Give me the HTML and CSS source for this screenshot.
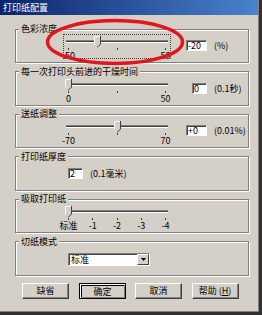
FILE: index.html
```html
<!DOCTYPE html>
<html>
<head>
  <meta charset="utf-8">
  <link rel="stylesheet" href="styles.css">
</head>
<body>
  <div class="window">
    <div class="titlebar">打印纸配置</div>

    <div class="content">
      <fieldset class="group">
        <legend>色彩浓度</legend>
        <div class="row">
          <div class="slider focus">
            <div class="track"></div>
            <svg class="thumb" style="left: 29px;" width="7" height="12" viewBox="0 0 7 12"><polygon points="0.5,0.5 6.5,0.5 6.5,8 3.5,11 0.5,8" fill="#d4d0c8"/><polyline points="0.5,8.5 0.5,0.5 6,0.5" fill="none" stroke="#fff"/><polyline points="6.5,0 6.5,8 3.5,11 3,11" fill="none" stroke="#404040"/></svg>
            <div class="ticks">
              <div class="tick"><i></i><span>-50</span></div>
              <div class="tick"><i></i><span></span></div>
              <div class="tick"><i></i><span>50</span></div>
            </div>
          </div>
          <div class="value"><span class="edit">-20</span></div>
          <span class="unit">(%)</span>
        </div>
      </fieldset>

      <fieldset class="group">
        <legend>每一次打印头前进的干燥时间</legend>
        <div class="row">
          <div class="slider">
            <div class="track"></div>
            <svg class="thumb" style="left: 0px;" width="7" height="12" viewBox="0 0 7 12"><polygon points="0.5,0.5 6.5,0.5 6.5,8 3.5,11 0.5,8" fill="#d4d0c8"/><polyline points="0.5,8.5 0.5,0.5 6,0.5" fill="none" stroke="#fff"/><polyline points="6.5,0 6.5,8 3.5,11 3,11" fill="none" stroke="#404040"/></svg>
            <div class="ticks">
              <div class="tick"><i></i><span>0</span></div>
              <div class="tick"><i></i><span></span></div>
              <div class="tick"><i></i><span>50</span></div>
            </div>
          </div>
          <div class="value"><span class="edit narrow">0</span></div>
          <span class="unit">(0.1秒)</span>
        </div>
      </fieldset>

      <fieldset class="group">
        <legend>送纸调整</legend>
        <div class="row">
          <div class="slider">
            <div class="track"></div>
            <svg class="thumb" style="left: 49px;" width="7" height="12" viewBox="0 0 7 12"><polygon points="0.5,0.5 6.5,0.5 6.5,8 3.5,11 0.5,8" fill="#d4d0c8"/><polyline points="0.5,8.5 0.5,0.5 6,0.5" fill="none" stroke="#fff"/><polyline points="6.5,0 6.5,8 3.5,11 3,11" fill="none" stroke="#404040"/></svg>
            <div class="ticks">
              <div class="tick"><i></i><span>-70</span></div>
              <div class="tick"><i></i><span></span></div>
              <div class="tick"><i></i><span>70</span></div>
            </div>
          </div>
          <div class="value"><span class="edit">+0</span></div>
          <span class="unit">(0.01%)</span>
        </div>
      </fieldset>

      <fieldset class="group">
        <legend>打印纸厚度</legend>
        <div class="row indent">
          <div class="value small"><span class="edit">2</span></div>
          <span class="unit">(0.1毫米)</span>
        </div>
      </fieldset>

      <fieldset class="group">
        <legend>吸取打印纸</legend>
        <div class="row">
          <div class="slider">
            <div class="track"></div>
            <svg class="thumb" style="left: 0px;" width="7" height="12" viewBox="0 0 7 12"><polygon points="0.5,0.5 6.5,0.5 6.5,8 3.5,11 0.5,8" fill="#d4d0c8"/><polyline points="0.5,8.5 0.5,0.5 6,0.5" fill="none" stroke="#fff"/><polyline points="6.5,0 6.5,8 3.5,11 3,11" fill="none" stroke="#404040"/></svg>
            <div class="ticks">
              <div class="tick"><i></i><span>标准</span></div>
              <div class="tick"><i></i><span>-1</span></div>
              <div class="tick"><i></i><span>-2</span></div>
              <div class="tick"><i></i><span>-3</span></div>
              <div class="tick"><i></i><span>-4</span></div>
            </div>
          </div>
        </div>
      </fieldset>

      <fieldset class="group">
        <legend>切纸模式</legend>
        <div class="row indent">
          <div class="combo">
            <span class="combo-text">标准</span>
            <span class="combo-btn"><svg width="5" height="3" viewBox="0 0 5 3"><polygon points="0,0 5,0 2.5,3" fill="#000"/></svg></span>
          </div>
        </div>
      </fieldset>

      <div class="buttons">
        <button>缺省</button>
        <button class="default">确定</button>
        <button>取消</button>
        <button>帮助 (<u>H</u>)</button>
      </div>
    </div>

    <!-- red mark drawn over the first slider -->
    <svg class="mark" width="142" height="50" viewBox="0 0 142 50"><ellipse cx="70" cy="24" rx="67.5" ry="21.5" fill="none" stroke="#e3141b" stroke-width="3.5"/></svg>
  </div>
</body>
</html>
```

FILE: styles.css
```css
body {
  margin: 0;
  background: #303030;
  font-family: "Noto Sans CJK SC", "Liberation Sans", sans-serif;
  font-size: 9px;
  color: #000;
}
.window {
  position: relative;
  width: 258px;
  height: 311px;
  background: #d4d0c8;
  border-right: 1px solid #808080;
  border-bottom: 1px solid #808080;
  overflow: hidden;
}
.titlebar {
  height: 15px;
  line-height: 15px;
  padding-left: 3px;
  color: #fff;
  background: linear-gradient(to right, #0a246a, #4a82cc);
}
.content {
  padding: 9px 9px 0 15px;
}
.group {
  margin: 0 0 3.5px 0;
  padding: 0;
  min-width: 0;
  border: 1px solid #808080;
  box-shadow: inset 1px 1px 0 #fff, 1px 1px 0 #fff;
}
.group legend {
  margin-left: 3px;
  padding: 0 2px;
  line-height: 10px;
  background: #d4d0c8;
}
.row {
  display: flex;
  align-items: flex-start;
  height: 28px;
  box-sizing: border-box;
  padding-top: 2px;
}
.row.indent {
  padding-left: 52px;
}
.slider {
  position: relative;
  width: 104px;
  height: 21px;
  margin-left: 49px;
}
.slider.focus {
  outline: 1px dotted #404040;
  outline-offset: 1px;
}
.track {
  height: 1px;
  margin: 4px 1px 0 1px;
  border-top: 1px solid #808080;
  border-bottom: 1px solid #fff;
  background: #404040;
}
.thumb {
  position: absolute;
  top: 0;
  left: 0;
}
.ticks {
  display: flex;
  justify-content: space-between;
  padding: 0 3px;
  margin-top: 5px;
}
.tick {
  width: 1px;
  display: flex;
  flex-direction: column;
  align-items: center;
}
.tick i {
  width: 1px;
  height: 2px;
  background: #404040;
}
.tick span {
  line-height: 9px;
  margin-top: 1px;
  white-space: nowrap;
}
.value {
  display: flex;
  justify-content: flex-end;
  width: 21px;
  margin: 4px 0 0 17px;
}
.value.small {
  width: auto;
  margin-left: 0;
}
.edit {
  min-width: 11px;
  height: 9px;
  line-height: 9px;
  padding: 0 1px;
  background: #fff;
  border: 1px solid;
  border-color: #808080 #fff #fff #808080;
  box-shadow: inset 1px 1px 0 #404040;
}
.value .edit {
  width: 17px;
}
.value .edit.narrow {
  width: 10px;
}
.value.small .edit {
  width: 9px;
}
.unit {
  margin: 4px 0 0 7px;
  line-height: 11px;
}
.combo {
  display: flex;
  align-items: center;
  justify-content: space-between;
  width: 80px;
  height: 11px;
  margin-top: 4px;
  background: #fff;
  border: 1px solid;
  border-color: #808080 #fff #fff #808080;
  box-shadow: inset 1px 1px 0 #404040;
}
.combo-text {
  padding-left: 2px;
  line-height: 11px;
}
.combo-btn {
  display: flex;
  align-items: center;
  justify-content: center;
  width: 10px;
  height: 9px;
  background: #d4d0c8;
  border: 1px solid;
  border-color: #fff #404040 #404040 #fff;
}
.buttons {
  display: flex;
  gap: 9.5px;
  margin: 7px 0 0 7px;
}
.buttons button {
  width: 47px;
  height: 16px;
  padding: 0;
  font: inherit;
  font-size: 9px;
  color: #000;
  background: #d4d0c8;
  border: 1px solid;
  border-color: #fff #404040 #404040 #fff;
  box-shadow: inset -1px -1px 0 #808080;
}
.buttons button.default {
  outline: 1px solid #000;
  outline-offset: -1px;
  border-width: 2px 1px 1px 2px;
  box-shadow: inset -1px -1px 0 #808080, inset 0 0 0 1px #000;
}
.buttons u {
  text-decoration: underline;
}
.mark {
  position: absolute;
  left: 45px;
  top: 18px;
}
```
